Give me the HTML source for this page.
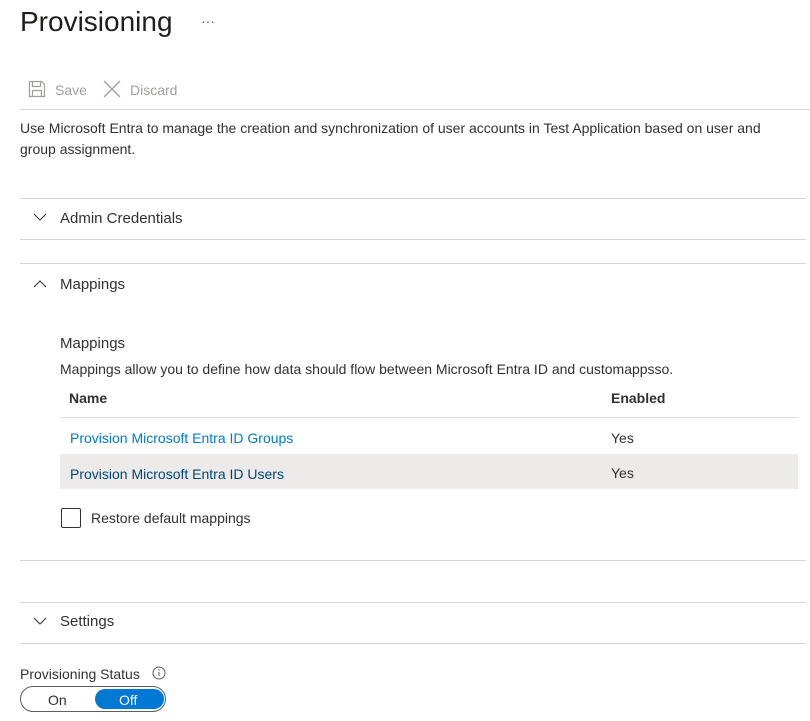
<!DOCTYPE html>
<html><head><style>
body{margin:0;width:810px;height:721px;background:#fff;font-family:"Liberation Sans",sans-serif;color:#323130;position:relative;overflow:hidden;font-size:14px}
.a{position:absolute;white-space:nowrap}
.l{position:absolute;height:1px;background:#d6d6d6;left:20px;right:4px}
</style></head><body>
<div class="a" style="left:20px;top:6px;font-size:28px;color:#201f1e">Provisioning</div>
<div class="a" style="left:201px;top:13px;font-size:14px;color:#555">···</div>
<svg class="a" style="left:28px;top:80px" width="18" height="18" viewBox="0 0 18 18" fill="none" stroke="#a19f9d" stroke-width="1.2"><path d="M1.5 1.5h12l3 3v12h-15z"/><path d="M4.5 1.5v5h8v-5M4.5 16.5v-6h9v6"/></svg>
<div class="a" style="left:55px;top:82px;color:#a19f9d">Save</div>
<svg class="a" style="left:103px;top:80px" width="18" height="18" viewBox="0 0 18 18" stroke="#a19f9d" stroke-width="1.3"><path d="M1 1L17 17M17 1L1 17"/></svg>
<div class="a" style="left:130px;top:82px;color:#a19f9d">Discard</div>
<div class="l" style="top:109px;right:0"></div>
<div class="a" style="left:20px;top:118px;line-height:21px;white-space:normal;width:775px">Use Microsoft Entra to manage the creation and synchronization of user accounts in Test Application based on user and group assignment.</div>
<div class="l" style="top:198px"></div>
<svg class="a" style="left:33px;top:213px" width="14" height="9"><path d="M1 1l6 6 6-6" fill="none" stroke="#323130"/></svg>
<div class="a" style="left:60px;top:210px;font-size:15px">Admin Credentials</div>
<div class="l" style="top:239px"></div>
<div class="l" style="top:263px"></div>
<svg class="a" style="left:33px;top:279px" width="14" height="9"><path d="M1 8l6-6 6 6" fill="none" stroke="#323130"/></svg>
<div class="a" style="left:60px;top:276px;font-size:15px">Mappings</div>
<div class="a" style="left:60px;top:335px;font-size:15px">Mappings</div>
<div class="a" style="left:60px;top:361px">Mappings allow you to define how data should flow between Microsoft Entra ID and customappsso.</div>
<div class="a" style="left:69px;top:390px;font-weight:bold;font-size:14px">Name</div>
<div class="a" style="left:611px;top:390px;font-weight:bold;font-size:14px">Enabled</div>
<div class="a" style="left:60px;width:738px;top:417px;height:1px;background:#e1dfdd"></div>
<div class="a" style="left:70px;top:430px;color:#0078d4">Provision Microsoft Entra ID Groups</div>
<div class="a" style="left:611px;top:430px">Yes</div>
<div class="a" style="left:60px;width:738px;top:454px;height:35px;background:#edebe9"></div>
<div class="a" style="left:70px;top:466px;color:#004578">Provision Microsoft Entra ID Users</div>
<div class="a" style="left:611px;top:465px">Yes</div>
<div class="a" style="left:61px;top:508px;width:18px;height:18px;border:1px solid #323130;border-radius:2px"></div>
<div class="a" style="left:91px;top:510px">Restore default mappings</div>
<div class="l" style="top:560px"></div>
<div class="l" style="top:602px"></div>
<svg class="a" style="left:33px;top:617px" width="14" height="9"><path d="M1 1l6 6 6-6" fill="none" stroke="#323130"/></svg>
<div class="a" style="left:60px;top:613px;font-size:15px">Settings</div>
<div class="l" style="top:643px"></div>
<div class="a" style="left:20px;top:666px">Provisioning Status</div>
<svg class="a" style="left:152px;top:666px" width="14" height="14"><circle cx="7" cy="7" r="6" fill="none" stroke="#605e5c"/><path d="M7 6v4" stroke="#605e5c"/><circle cx="7" cy="4" r=".7" fill="#605e5c"/></svg>
<div class="a" style="left:20px;top:686px;width:144px;height:24px;border:1px solid #605e5c;border-radius:13px"></div>
<div class="a" style="left:95px;top:689px;width:69px;height:20px;background:#0078d4;border-radius:10px"></div>
<div class="a" style="left:48px;top:692px">On</div>
<div class="a" style="left:119px;top:692px;color:#fff">Off</div>
</body></html>
